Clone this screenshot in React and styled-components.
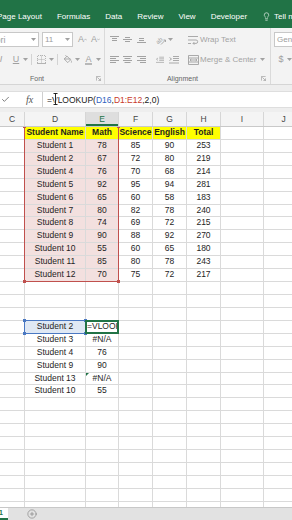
import React from 'react';
import styled, { createGlobalStyle } from 'styled-components';
import { Lightbulb, Check, CirclePlus } from 'lucide-react';

const GlobalStyle = createGlobalStyle`
  html, body {
    margin: 0;
    padding: 0;
    background: #ffffff;
  }
  body {
    font-family: "Liberation Sans", Arial, sans-serif;
    overflow: hidden;
  }
  * {
    box-sizing: border-box;
  }
`;

/** sheet geometry (columns C..J, visible part only) **/
const COL_TEMPLATE = '25px 61px 33px 34px 34px 34px 43px 40px';
const COLS = ['C', 'D', 'E', 'F', 'G', 'H', 'I', 'J'];
const ROW_H = 12.93;
const TOTAL_ROWS = 30;

const students = [
  ['Student 1', 78, 85, 90, 253],
  ['Student 2', 67, 72, 80, 219],
  ['Student 4', 76, 70, 68, 214],
  ['Student 5', 92, 95, 94, 281],
  ['Student 6', 65, 60, 58, 183],
  ['Student 7', 80, 82, 78, 240],
  ['Student 8', 74, 69, 72, 215],
  ['Student 9', 90, 88, 92, 270],
  ['Student 10', 55, 60, 65, 180],
  ['Student 11', 85, 80, 78, 243],
  ['Student 12', 70, 75, 72, 217],
];

const lookups = [
  ['Student 2', '=VLOOK'],
  ['Student 3', '#N/A'],
  ['Student 4', '76'],
  ['Student 9', '90'],
  ['Student 13', '#N/A'],
  ['Student 10', '55'],
];

const buildRows = () => {
  const rows = Array.from({ length: TOTAL_ROWS }, () => Array(8).fill(''));
  rows[0] = ['', 'Student Name', 'Math', 'Science', 'English', 'Total', '', ''];
  students.forEach((s, i) => {
    rows[i + 1] = ['', ...s, '', ''];
  });
  lookups.forEach(([name, val], i) => {
    rows[15 + i][1] = name;
    rows[15 + i][2] = val;
  });
  return rows;
};

// row / col are 1-based sheet row and 0-based visible column
const cellProps = (row, col) => {
  if (row === 1 && col >= 1 && col <= 5) return { $fill: '#ffff00', $bold: true };
  if (row >= 2 && row <= 12 && (col === 1 || col === 2)) return { $fill: '#f3e0df' };
  if (row === 16 && col === 1) return { $fill: '#dfe8f4' };
  if (row === 16 && col === 2) return { $align: 'left' };
  return {};
};

/** layout **/

const Window = styled.div`
  width: 292px;
  height: 520px;
  display: flex;
  flex-direction: column;
  overflow: hidden;
  background: #fff;
`;

const TabBar = styled.div`
  flex: none;
  height: 28px;
  padding-top: 4px;
  background: #217346;
  color: #ffffff;
  font-size: 8px;
  display: flex;
  align-items: center;
  gap: 15px;
  white-space: nowrap;
  overflow: hidden;

  & > :first-child {
    margin-left: -3px;
  }
`;

const Tab = styled.span`
  flex: none;
`;

const TellMe = styled.span`
  flex: none;
  display: flex;
  align-items: center;
  gap: 3px;
`;

const Ribbon = styled.div`
  flex: none;
  height: 57px;
  background: #f3f3f3;
  border-bottom: 1px solid #d5d5d5;
  display: flex;
  overflow: hidden;
`;

const Group = styled.div`
  flex: none;
  width: ${p => p.$w}px;
  margin-left: ${p => p.$ml || 0}px;
  padding: 4px 4px 0;
  border-right: 1px solid #dadada;
  display: grid;
  grid-template-rows: 15px 15px 1fr;
  row-gap: 5px;
`;

const Row = styled.div`
  display: flex;
  align-items: center;
  height: 15px;
  white-space: nowrap;
`;

const Slot = styled.span`
  flex: none;
  display: flex;
  align-items: center;
  justify-content: center;
  width: ${p => (p.$w ? `${p.$w}px` : 'auto')};
  margin-left: ${p => p.$ml || 0}px;
  color: #a2a2a2;
`;

const Sep = styled.span`
  flex: none;
  width: 1px;
  height: 11px;
  margin-left: ${p => p.$ml || 0}px;
  background: #d3d3d3;
`;

const ComboBox = styled.span`
  flex: none;
  display: flex;
  align-items: center;
  justify-content: space-between;
  width: ${p => p.$w}px;
  height: 15px;
  margin-left: ${p => p.$ml || 0}px;
  padding: 0 2px 0 ${p => p.$pl || 2}px;
  background: #ffffff;
  border: 1px solid #c8c8c8;
  color: #9c9c9c;
  font-size: ${p => p.$fs || 8}px;
  overflow: hidden;
`;

const Glyph = styled.span`
  font-size: 9px;
  line-height: 9px;
  font-weight: ${p => (p.$bold ? 700 : 400)};
  font-style: ${p => (p.$italic ? 'italic' : 'normal')};
  text-decoration: ${p => (p.$underline ? 'underline' : 'none')};
  color: #a0a0a0;
`;

const ColorA = styled.span`
  font-size: 9px;
  line-height: 8px;
  color: #a0a0a0;
  border-bottom: 2px solid #b8b8b8;
`;

const ButtonText = styled.span`
  flex: none;
  margin-left: ${p => p.$ml || 0}px;
  font-size: 8px;
  color: #a3a3a3;
`;

const LabelRow = styled.div`
  display: grid;
  grid-template-columns: 1fr auto 1fr;
  align-items: center;
  height: 12px;
`;

const GroupLabel = styled.span`
  grid-column: 2;
  font-size: 7px;
  color: #666666;
  margin-right: ${p => p.$nudge || 0}px;
`;

const Launcher = styled.span`
  grid-column: 3;
  justify-self: end;
  display: flex;
  color: #9a9a9a;
`;

/** formula bar **/

const FormulaStrip = styled.div`
  flex: none;
  height: 27px;
  padding: 6px 0 4px;
  background: #eeeeee;
`;

const FormulaBar = styled.div`
  height: 17px;
  display: flex;
  align-items: center;
  background: #ffffff;
  border-top: 1px solid #dedede;
  border-bottom: 1px solid #dedede;
`;

const FormulaButtons = styled.div`
  flex: none;
  width: 43px;
  height: 100%;
  display: flex;
  align-items: center;
  padding-left: 1px;
  border-right: 1px solid #cfcfcf;
  color: #555555;
`;

const Fx = styled.span`
  margin-left: 16px;
  font-family: "Liberation Serif", "Times New Roman", serif;
  font-style: italic;
  font-size: 10px;
  color: #555555;
`;

const FormulaText = styled.div`
  position: relative;
  padding-left: 4px;
  font-size: 8.5px;
  color: #202020;
  white-space: nowrap;
`;

const RefText = styled.span`
  color: ${p => p.$color};
`;

const IBeam = styled.svg`
  position: absolute;
  left: 10px;
  top: -2px;
`;

/** sheet **/

const ColHeaders = styled.div`
  flex: none;
  height: 15px;
  display: grid;
  grid-template-columns: ${COL_TEMPLATE};
  background: #f4f4f4;
  border-bottom: 1px solid #c9c9c9;
`;

const ColHeader = styled.div`
  display: flex;
  align-items: center;
  justify-content: center;
  font-size: 8.5px;
  color: ${p => (p.$selected ? '#217346' : '#454545')};
  background: ${p => (p.$selected ? '#dedede' : 'transparent')};
  border-right: 1px solid #d6d6d6;
  box-shadow: ${p => (p.$selected ? 'inset 0 -2px 0 #217346' : 'none')};
`;

const Sheet = styled.div`
  flex: 1;
  min-height: 0;
  position: relative;
  overflow: hidden;
`;

const CellGrid = styled.div`
  display: grid;
  grid-template-columns: ${COL_TEMPLATE};
  grid-auto-rows: ${ROW_H}px;
`;

const OverlayGrid = styled(CellGrid)`
  position: absolute;
  inset: 0;
  pointer-events: none;
`;

const Cell = styled.div`
  position: relative;
  border-right: 1px solid #dadada;
  border-bottom: 1px solid #dadada;
  background: ${p => p.$fill || '#ffffff'};
  font-weight: ${p => (p.$bold ? 700 : 400)};
  text-align: ${p => p.$align || 'center'};
  padding-left: ${p => (p.$align === 'left' ? 1 : 0)}px;
  font-size: 8.5px;
  line-height: ${ROW_H - 1}px;
  color: #1e1e1e;
  white-space: nowrap;
  overflow: hidden;
`;

const ErrorFlag = styled.span`
  position: absolute;
  top: 0;
  left: 0;
  border-top: 3px solid #217346;
  border-right: 3px solid transparent;
`;

const RefBox = styled.div`
  position: relative;
  grid-row: ${p => p.$rows};
  grid-column: ${p => p.$cols};
  margin: -1px 0 0 -1px;
  border: ${p => (p.$thick ? 2 : 1)}px solid ${p => p.$color};
`;

const Handle = styled.span`
  position: absolute;
  width: 3px;
  height: 3px;
  background: ${p => p.$color};
  ${p => p.$v}: -2px;
  ${p => p.$h}: -2px;
`;

const SheetBar = styled.div`
  flex: none;
  height: 13px;
  display: flex;
  align-items: center;
  background: #e2e2e2;
  border-top: 1px solid #c8c8c8;
`;

const ActiveSheetTab = styled.div`
  flex: none;
  width: 8px;
  height: 100%;
  padding-right: 5px;
  background: #ffffff;
  border-bottom: 2px solid #217346;
  overflow: hidden;
  direction: rtl;
  white-space: nowrap;
  font-size: 7px;
  font-weight: 700;
  line-height: 10px;
  color: #217346;
`;

const AddSheet = styled.span`
  display: flex;
  margin-left: 19px;
  color: #777777;
`;

/** icons **/

const Caret = () => (
  <svg width="5" height="3" viewBox="0 0 5 3">
    <path d="M0 0h5L2.5 3z" fill="currentColor" />
  </svg>
);

const SizeCaret = ({ up }) => (
  <svg width="4" height="3" viewBox="0 0 4 3" fill="none" stroke="currentColor" strokeWidth="0.8">
    <path d={up ? 'M0.3 2.7L2 0.7l1.7 2' : 'M0.3 0.3L2 2.3l1.7-2'} />
  </svg>
);

const VAlignIcon = ({ pos }) => {
  const d = {
    top: 'M0 0.5h9M2 2.5h5M2 4.5h5',
    middle: 'M2 1.5h5M0 3.5h9M2 5.5h5',
    bottom: 'M2 2.5h5M2 4.5h5M0 6.5h9',
  }[pos];
  return (
    <svg width="9" height="8" viewBox="0 0 9 8" fill="none" stroke="currentColor">
      <path d={d} />
    </svg>
  );
};

const HAlignIcon = ({ pos }) => {
  const d = {
    left: 'M0 0.5h9M0 2.5h6M0 4.5h9M0 6.5h6',
    center: 'M0 0.5h9M1.5 2.5h6M0 4.5h9M1.5 6.5h6',
    right: 'M0 0.5h9M3 2.5h6M0 4.5h9M3 6.5h6',
  }[pos];
  return (
    <svg width="9" height="8" viewBox="0 0 9 8" fill="none" stroke="currentColor">
      <path d={d} />
    </svg>
  );
};

const OrientIcon = () => (
  <svg width="10" height="10" viewBox="0 0 10 10" fill="none" stroke="currentColor" strokeWidth="0.9">
    <text x="0" y="8" fontSize="6" fill="currentColor" stroke="none" transform="rotate(-40 3 6)">ab</text>
    <path d="M5 9.5L9.5 5M7.5 5h2v2" />
  </svg>
);

const WrapIcon = () => (
  <svg width="11" height="10" viewBox="0 0 11 10" fill="none" stroke="currentColor" strokeWidth="0.9">
    <path d="M0 1.5h10M0 5h8a1.7 1.7 0 0 1 0 3.4H5M6.3 7.1L5 8.4l1.3 1.3M0 8.5h3" />
  </svg>
);

const MergeIcon = () => (
  <svg width="11" height="10" viewBox="0 0 11 10" fill="none" stroke="currentColor" strokeWidth="0.9">
    <path d="M0.5 0.5h10v9h-10zM0.5 3h10M0.5 7h10M2 5h7M3.3 4L2 5l1.3 1M7.7 4L9 5 7.7 6" />
  </svg>
);

const IndentIcon = ({ increase }) => (
  <svg width="10" height="8" viewBox="0 0 10 8" fill="none" stroke="currentColor" strokeWidth="0.9">
    <path d="M4 0.5h6M4 2.5h6M4 4.5h6M0 7h10" />
    <path d={increase ? 'M0.5 1.5L2.5 3 0.5 4.5' : 'M2.5 1.5L0.5 3l2 1.5'} />
  </svg>
);

const BorderIcon = () => (
  <svg width="9" height="9" viewBox="0 0 9 9" fill="none" stroke="currentColor" strokeWidth="0.8">
    <path d="M0.5 8V0.5h8V8M4.5 0.5v8M0.5 4.5h8" strokeDasharray="1 1" />
    <path d="M0 8.5h9" />
  </svg>
);

const BucketIcon = () => (
  <svg width="9" height="9" viewBox="0 0 9 9" fill="none" stroke="currentColor" strokeWidth="0.9">
    <path d="M4 1.2L7.6 4.8 4.8 7.6 1.2 4 4 1.2zM2.5 0.3L4 1.8M1.2 4h6.4" />
    <path d="M8.2 5.6c0.6 1 0.6 1.6 0 2" />
  </svg>
);

const LauncherIcon = () => (
  <svg width="5" height="5" viewBox="0 0 5 5" fill="none" stroke="currentColor" strokeWidth="0.7">
    <path d="M0.4 4.6V0.4h4.2M1.4 1.4l3 3M4.6 2.4v2.2H2.4" />
  </svg>
);

/** ribbon groups **/

const FontGroup = () => (
  <Group $w={136} $ml={-31}>
    <Row>
      <ComboBox $ml={2} $w={64} $pl={4} $fs={9}>
        <span>Calibri</span>
        <Caret />
      </ComboBox>
      <ComboBox $ml={3} $w={31}>
        <span>11</span>
        <Slot>
          <Caret />
        </Slot>
      </ComboBox>
      <Slot $ml={5} $w={9}>
        <Glyph>A</Glyph>
        <SizeCaret up />
      </Slot>
      <Slot $ml={4} $w={9}>
        <Glyph>A</Glyph>
        <SizeCaret />
      </Slot>
    </Row>
    <Row>
      <Slot $ml={5} $w={8}><Glyph $bold>B</Glyph></Slot>
      <Slot $ml={12} $w={6}><Glyph $italic>I</Glyph></Slot>
      <Slot $ml={8} $w={8}><Glyph $underline>U</Glyph></Slot>
      <Slot $ml={3} $w={5}><Caret /></Slot>
      <Sep $ml={3} />
      <Slot $ml={5} $w={9}><BorderIcon /></Slot>
      <Slot $ml={3} $w={5}><Caret /></Slot>
      <Sep $ml={3} />
      <Slot $ml={5} $w={9}><BucketIcon /></Slot>
      <Slot $ml={3} $w={5}><Caret /></Slot>
      <Slot $ml={4} $w={9}><ColorA>A</ColorA></Slot>
      <Slot $ml={3} $w={5}><Caret /></Slot>
    </Row>
    <LabelRow>
      <GroupLabel>Font</GroupLabel>
      <Launcher><LauncherIcon /></Launcher>
    </LabelRow>
  </Group>
);

const AlignmentGroup = () => (
  <Group $w={166}>
    <Row>
      <Slot $ml={1} $w={9}><VAlignIcon pos="top" /></Slot>
      <Slot $ml={4} $w={9}><VAlignIcon pos="middle" /></Slot>
      <Slot $ml={5} $w={9}><VAlignIcon pos="bottom" /></Slot>
      <Slot $ml={10} $w={10}><OrientIcon /></Slot>
      <Slot $ml={2} $w={5}><Caret /></Slot>
      <Slot $ml={15} $w={11}><WrapIcon /></Slot>
      <ButtonText $ml={1}>Wrap Text</ButtonText>
    </Row>
    <Row>
      <Slot $ml={1} $w={9}><HAlignIcon pos="left" /></Slot>
      <Slot $ml={4} $w={9}><HAlignIcon pos="center" /></Slot>
      <Slot $ml={5} $w={9}><HAlignIcon pos="right" /></Slot>
      <Slot $ml={10} $w={8}><IndentIcon /></Slot>
      <Slot $ml={5} $w={10}><IndentIcon increase /></Slot>
      <Slot $ml={9} $w={11}><MergeIcon /></Slot>
      <ButtonText $ml={1}>Merge &amp; Center</ButtonText>
      <Slot $ml={4} $w={5}><Caret /></Slot>
    </Row>
    <LabelRow>
      <GroupLabel $nudge={10}>Alignment</GroupLabel>
      <Launcher><LauncherIcon /></Launcher>
    </LabelRow>
  </Group>
);

const NumberGroup = () => (
  <Group $w={60}>
    <Row>
      <ComboBox $ml={-1} $w={60} $pl={2}>
        <span>General</span>
      </ComboBox>
    </Row>
    <Row>
      <Slot $ml={2} $w={8}><Glyph>$</Glyph></Slot>
      <Slot $ml={2} $w={5}><Caret /></Slot>
    </Row>
  </Group>
);

/** main **/

const App = () => {
  const rows = buildRows();

  return (
    <Window>
      <GlobalStyle />

      <TabBar>
        <Tab>Page Layout</Tab>
        <Tab>Formulas</Tab>
        <Tab>Data</Tab>
        <Tab>Review</Tab>
        <Tab>View</Tab>
        <Tab>Developer</Tab>
        <TellMe>
          <Lightbulb size={9} strokeWidth={1.6} />
          <span>Tell me what you want to do</span>
        </TellMe>
      </TabBar>

      <Ribbon>
        <FontGroup />
        <AlignmentGroup />
        <NumberGroup />
      </Ribbon>

      <FormulaStrip>
        <FormulaBar>
          <FormulaButtons>
            <Check size={9} strokeWidth={2} />
            <Fx>fx</Fx>
          </FormulaButtons>
          <FormulaText>
            =VLOOKUP(<RefText $color="#2f62c0">D16</RefText>,<RefText $color="#c8392b">D1:E12</RefText>,2,0)
            <IBeam width="5" height="12" viewBox="0 0 5 12" fill="none">
              <path d="M0.5 0.5h4M2.5 0.5v11M0.5 11.5h4" stroke="#ffffff" strokeWidth="2" />
              <path d="M0.5 0.5h4M2.5 0.5v11M0.5 11.5h4" stroke="#111111" strokeWidth="0.9" />
            </IBeam>
          </FormulaText>
        </FormulaBar>
      </FormulaStrip>

      <ColHeaders>
        {COLS.map(c => (
          <ColHeader key={c} $selected={c === 'E'}>{c}</ColHeader>
        ))}
      </ColHeaders>

      <Sheet>
        <CellGrid>
          {rows.map((cells, r) =>
            cells.map((value, c) => (
              <Cell key={`${r}-${c}`} {...cellProps(r + 1, c)}>
                {r + 1 === 20 && c === 2 && <ErrorFlag />}
                {value}
              </Cell>
            ))
          )}
        </CellGrid>

        <OverlayGrid>
          <RefBox $rows="1 / 13" $cols="2 / 4" $color="#c0504d">
            <Handle $color="#c0504d" $v="top" $h="left" />
            <Handle $color="#c0504d" $v="top" $h="right" />
            <Handle $color="#c0504d" $v="bottom" $h="left" />
            <Handle $color="#c0504d" $v="bottom" $h="right" />
          </RefBox>
          <RefBox $rows="16" $cols="2" $color="#4a78c2">
            <Handle $color="#4a78c2" $v="top" $h="left" />
            <Handle $color="#4a78c2" $v="top" $h="right" />
            <Handle $color="#4a78c2" $v="bottom" $h="left" />
            <Handle $color="#4a78c2" $v="bottom" $h="right" />
          </RefBox>
          <RefBox $rows="16" $cols="3" $color="#217346" $thick />
        </OverlayGrid>
      </Sheet>

      <SheetBar>
        <ActiveSheetTab>Sheet1</ActiveSheetTab>
        <AddSheet>
          <CirclePlus size={10} strokeWidth={1.4} />
        </AddSheet>
      </SheetBar>
    </Window>
  );
};

export default App;
